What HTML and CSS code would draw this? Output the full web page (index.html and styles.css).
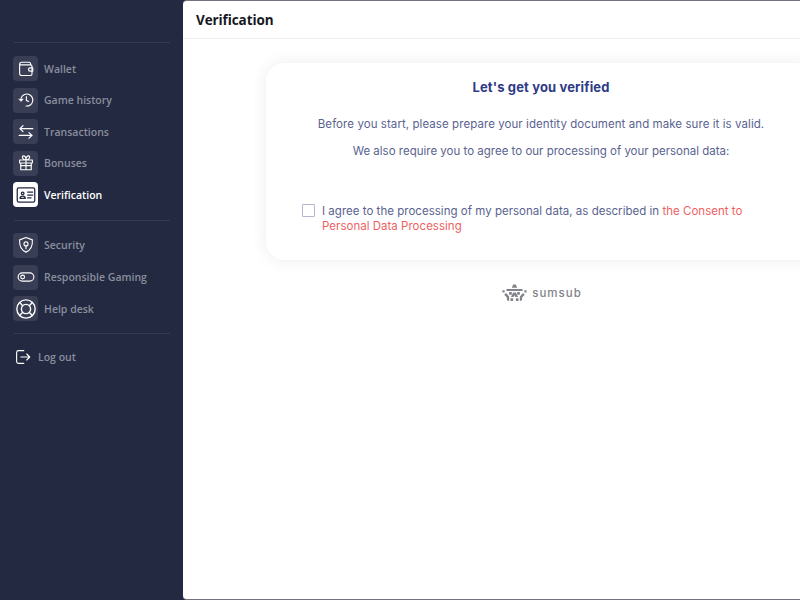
FILE: index.html
```html
<!DOCTYPE html>
<html lang="en">
<head>
<meta charset="utf-8">
<title>Verification</title>
<link rel="stylesheet" href="styles.css">
</head>
<body>
<aside class="sidebar">
  <hr class="divider">
  <nav class="group group-first">
    <a class="item"><span class="icon"><svg viewBox="0 0 24 24"><path d="M18 6.500V5a2 2 0 0 0-2-2H6a2.500 2.500 0 0 0-2.500 2.500v12A3.200 3.200 0 0 0 6.700 20.700H18a2 2 0 0 0 2-2V8.500a2 2 0 0 0-2-2H3.500"/><path d="M21 10.500h-3.500a2.200 2.200 0 0 0 0 4.400H21z"/></svg></span>Wallet</a>
    <a class="item"><span class="icon"><svg viewBox="0 0 24 24"><path d="M5.500 9.500A8 8 0 1 1 12 20"/><path d="M2.500 10.500h6L5.500 14z" class="solid"/><path d="M12.500 7.500v5l3 1.500"/></svg></span>Game history</a>
    <a class="item"><span class="icon"><svg viewBox="0 0 24 24"><path d="M21 7.500H4M8 3.500l-4 4 4 4" class="thin"/><path d="M3 16.500h17M16 12.800l4 3.700-4 3.700" class="thin"/></svg></span>Transactions</a>
    <a class="item"><span class="icon"><svg viewBox="0 0 24 24"><path d="M3.500 8h17v4h-17zM5 12v9h14v-9M12 8v13M12 8C7 8 6 2.500 8.500 2.500S12 5 12 8zM12 8c5 0 6-5.500 3.500-5.500S12 5 12 8z"/><path d="M5 15.500h14"/></svg></span>Bonuses</a>
    <a class="item active"><span class="icon"><svg viewBox="0 0 24 24"><rect x="1.500" y="3.500" width="21" height="17" rx="2"/><circle cx="8" cy="10" r="1.600"/><path d="M4.800 16c.3-3.400 6.100-3.400 6.400 0zM14 8.500h6M14 12h6M14 15.500h4"/></svg></span>Verification</a>
  </nav>
  <hr class="divider">
  <nav class="group group-second">
    <a class="item"><span class="icon"><svg viewBox="0 0 24 24"><path d="M12 2l8.500 3.200c.5 7.300-1.500 13.300-8.500 16.300-7-3-9-9-8.500-16.300z"/><circle cx="12" cy="10.500" r="2.700"/><path d="M12 13.200V17"/></svg></span>Security</a>
    <a class="item"><span class="icon icon-wide"><svg viewBox="0 0 24 24"><rect x="1.500" y="6.500" width="21" height="11" rx="5.500"/><circle cx="7.500" cy="12" r="2.500"/></svg></span>Responsible Gaming</a>
    <a class="item"><span class="icon icon-large"><svg viewBox="0 0 24 24"><circle cx="12" cy="12" r="10"/><circle cx="12" cy="12" r="5"/><path d="M5 5l3.500 3.500M19 5l-3.500 3.500M5 19l3.500-3.500M19 19l-3.500-3.500"/></svg></span>Help desk</a>
  </nav>
  <hr class="divider">
  <a class="logout"><svg viewBox="0 0 24 24"><path d="M13 3.500H6A2.500 2.500 0 0 0 3.500 6v12A2.500 2.500 0 0 0 6 20.500h7"/><path d="M9 12h12M17 8l4 4-4 4"/></svg>Log out</a>
</aside>
<main class="main">
  <header class="header"><h1>Verification</h1></header>
  <section class="content">
    <div class="card">
      <h2>Let's get you verified</h2>
      <p class="intro">Before you start, please prepare your identity document and make sure it is valid.</p>
      <p class="intro intro-tight">We also require you to agree to our processing of your personal data:</p>
      <label class="consent">
        <span class="box"></span>
        <span class="consent-text">I agree to the processing of my personal data, as described in <a>the Consent to Personal Data Processing</a></span>
      </label>
    </div>
    <div class="brand">
      <svg viewBox="0 0 28 22"><path d="M11 5l1.500-3.500h3L17 5zM5 6.500h18v2.200H5zM.5 8h2.500v2.500H.5zM25 8h2.500v2.500H25zM8 10h3v3H8zM17 10h3v3h-3zM12.500 10.500h3l2.500 5h-3l-1-2-1 2h-3zM4.500 11l3.500 4v5l-2.500-1v-3l-3-3zM23.500 11l-3.500 4v5l2.500-1v-3l3-3zM9.500 17h3v3h-3zM15.500 17h3v3h-3z"/></svg>
      <span>sumsub</span>
    </div>
  </section>
</main>
</body>
</html>
```
FILE: styles.css
```css
* { box-sizing: border-box; }
html, body { height: 100%; }
body {
  margin: 0;
  display: flex;
  overflow: hidden;
  background: #232940;
  font-family: "Open Sans", "Noto Sans", sans-serif;
}
.sidebar {
  flex: 0 0 183px;
  padding: 42px 13px 0;
  display: flex;
  flex-direction: column;
}
.divider {
  width: 156px;
  height: 1px;
  margin: 0 0 0 1px;
  border: 0;
  background: #333a53;
}
.group {
  display: flex;
  flex-direction: column;
  gap: 6.600px;
}
.group-first { padding: 13px 0 12.600px; }
.group-second { padding: 12px 0 11.800px; }
.item {
  display: flex;
  align-items: center;
  gap: 6px;
  height: 25px;
  font-size: 10.500px;
  font-weight: 600;
  color: #8a8e9e;
}
.icon {
  flex: 0 0 25px;
  width: 25px;
  height: 25px;
  border-radius: 4px;
  background: #393e55;
  display: flex;
  align-items: center;
  justify-content: center;
}
.icon svg { width: 18px; height: 18px; }
.icon-large svg { width: 22px; height: 22px; }
svg { fill: none; stroke: #fff; stroke-width: 1.500; stroke-linecap: round; stroke-linejoin: round; }
.solid { fill: #fff; stroke-width: .5; }
.thin { stroke-width: 1.700; }
.item.active { color: #fff; }
.item.active .icon { background: #fff; }
.item.active svg { stroke: #232940; width: 20px; height: 20px; }
.logout {
  display: flex;
  align-items: center;
  gap: 6px;
  margin: 14px 0 0 1px;
  font-size: 10.500px;
  font-weight: 600;
  color: #8a8e9e;
}
.logout svg { width: 18px; height: 18px; }
.main {
  flex: 1;
  min-width: 0;
  background: #fff;
  border-top: 1px solid #70737c;
  border-bottom: 1px solid #70737c;
  border-radius: 4px 0 0 4px;
  display: flex;
  flex-direction: column;
  overflow: hidden;
}
.header {
  height: 38px;
  flex: none;
  padding: 0 13px;
  display: flex;
  align-items: center;
  border-bottom: 1px solid #eeeef1;
}
h1 {
  margin: 0;
  font-size: 13.500px;
  letter-spacing: -.1px;
  font-weight: 700;
  color: #16181f;
}
.content {
  flex: 1;
  padding: 24px 0 0 83px;
}
.card {
  width: 550px;
  height: 197px;
  padding: 15px 36px 0;
  border-radius: 18px;
  background: #fff;
  box-shadow: 0 0 16px rgba(35, 41, 66, .09);
  text-align: center;
  font-family: Inter, sans-serif;
}
h2 {
  margin: 0;
  font-size: 13px;
  line-height: 18px;
  letter-spacing: .14px;
  font-weight: 700;
  color: #2f3a86;
}
.intro {
  margin: 21px 0 0;
  font-size: 11.500px;
  line-height: 14px;
  letter-spacing: .07px;
  color: #5a6390;
}
.intro-tight {
  margin-top: 13px;
  letter-spacing: 0;
}
.consent {
  display: flex;
  gap: 7px;
  margin-top: 46px;
  text-align: left;
  font-size: 11.500px;
  line-height: 15px;
  letter-spacing: .02px;
  color: #5a6390;
}
.box {
  flex: 0 0 13px;
  height: 13px;
  border: 1px solid #b4b7cd;
  border-radius: 1px;
}
.consent-text { width: 440px; }
.consent-text a { color: #ee5f63; }
.brand {
  display: flex;
  align-items: center;
  justify-content: center;
  gap: 5px;
  width: 550px;
  margin-top: 23px;
  padding-left: 2px;
  color: #80838a;
  font-family: Inter, sans-serif;
  font-size: 11.500px;
  font-weight: 500;
  letter-spacing: 1px;
}
.brand svg { width: 25px; height: 20px; fill: #80838a; stroke: none; }
```
